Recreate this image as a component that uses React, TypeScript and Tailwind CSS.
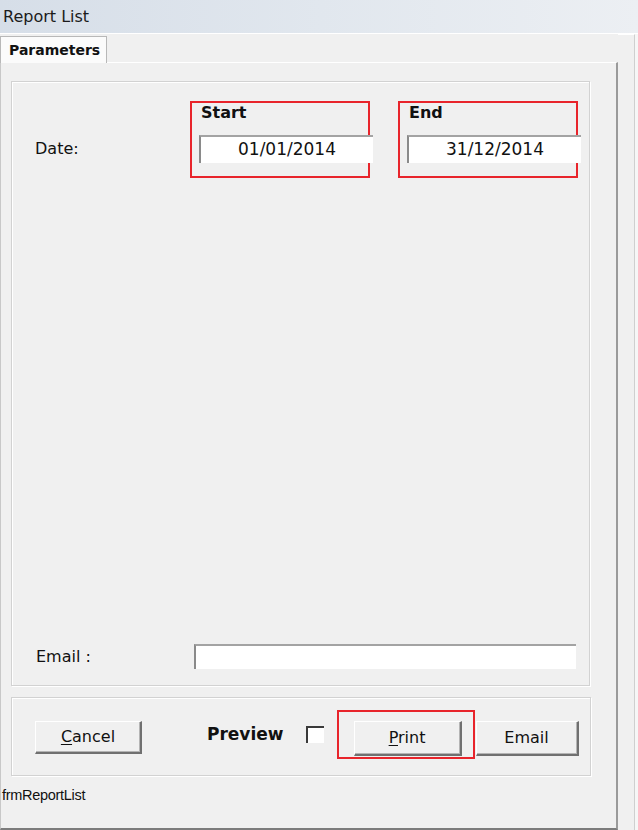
import React from "react";

const font = { fontFamily: '"DejaVu Sans", Verdana, sans-serif' };

const Btn = ({ children, className = "" }: { children: React.ReactNode; className?: string }) => (
  <button
    className={`flex items-center justify-center bg-[#f0f0f0] border-t border-l border-t-white border-l-white border-r-2 border-b-2 border-r-[#707070] border-b-[#707070] text-[16px] text-[#111] shadow-[inset_-1px_-1px_0_#b4b4b4] ${className}`}
  >
    {children}
  </button>
);

const DateField = ({ label, value }: { label: string; value: string }) => (
  <div className="w-[180px] h-[77px] border-2 border-[#e8242b] flex flex-col">
    <div className="pl-[9px] text-[16px] font-bold leading-[20px] text-[#111]">{label}</div>
    <div className="mt-[12px] ml-[7px] w-[174px] h-[28px] bg-white border-t-2 border-l-2 border-t-[#a3a3a3] border-l-[#8a8a8a] flex items-center justify-center text-[17px] text-[#111]">
      {value}
    </div>
  </div>
);

export default function App() {
  return (
    <div className="w-[638px] h-[830px] bg-[#f0f0f0] overflow-hidden flex flex-col" style={font}>
      {/* title bar */}
      <div className="h-[34px] shrink-0 flex items-center pl-[3px] bg-gradient-to-r from-[#d6dee8] via-[#e1e7ee] to-[#eceff3] border-b border-white text-[16px] text-[#1b1b1b]">
        Report List
      </div>

      <div className="flex flex-1">
        {/* tab control */}
        <div className="w-[618px] flex flex-col pt-[2px]">
          <div className="w-[107px] h-[27px] bg-[#fbfbfb] border-t border-l border-r border-[#b8b8b8] flex items-center pl-[8px] text-[14px] font-bold text-[#111] -mb-px relative">
            Parameters
          </div>
          <div className="flex-1 flex flex-col border-t border-t-white border-l border-l-[#c8c8c8] border-r-2 border-r-[#9a9a9a] border-b-2 border-b-[#7c7c7c] pt-[18px] pl-[10px] pr-[26px]">
            {/* parameters group */}
            <div className="h-[605px] flex flex-col border border-[#d2d2d2] shadow-[inset_1px_1px_0_#ffffff,1px_1px_0_#ffffff] pt-[19px] pl-[23px] pb-[16px]">
              <div className="flex items-start">
                <div className="w-[155px] mt-[38px] text-[16px] leading-[20px] text-[#111]">Date:</div>
                <DateField label="Start" value="01/01/2014" />
                <div className="w-[28px]" />
                <DateField label="End" value="31/12/2014" />
              </div>
              <div className="mt-auto flex items-center">
                <div className="w-[159px] pl-[1px] text-[16px] text-[#111]">Email :</div>
                <div className="w-[382px] h-[25px] bg-white border-t-2 border-l-2 border-t-[#a3a3a3] border-l-[#8a8a8a]" />
              </div>
            </div>

            {/* buttons group */}
            <div className="mt-[11px] h-[79px] w-[580px] flex items-start border border-[#d2d2d2] shadow-[inset_1px_1px_0_#ffffff,1px_1px_0_#ffffff] pt-[12px] pl-[23px]">
              <Btn className="w-[107px] h-[33px] mt-[11px]">
                <span>
                  <span className="underline underline-offset-2">C</span>ancel
                </span>
              </Btn>
              <div className="ml-[65px] mt-[13px] text-[17px] font-bold leading-[22px] text-[#111]">Preview</div>
              <div className="ml-[22px] mt-[16px] w-[18px] h-[17px] bg-white border-t-2 border-l-2 border-[#3a3a3a]" />
              <div className="ml-[13px] w-[138px] h-[49px] border-2 border-[#e8242b] pl-[15px] pt-[9px]">
                <Btn className="w-[108px] h-[35px]">
                  <span>
                    <span className="underline underline-offset-2">P</span>rint
                  </span>
                </Btn>
              </div>
              <Btn className="ml-[1px] mt-[11px] w-[103px] h-[35px]">Email</Btn>
            </div>

            <div
              className="mt-[9px] -ml-[9px] text-[14.5px] tracking-[-0.3px] text-[#111]"
              style={{ fontFamily: '"Liberation Sans", Arial, sans-serif' }}
            >
              frmReportList
            </div>
          </div>
        </div>

        {/* window frame strip */}
        <div className="w-[17px] border-r border-r-[#cfcfcf] border-t border-t-white" />
        <div className="flex-1 bg-[#f6f6f6]" />
      </div>
    </div>
  );
}
